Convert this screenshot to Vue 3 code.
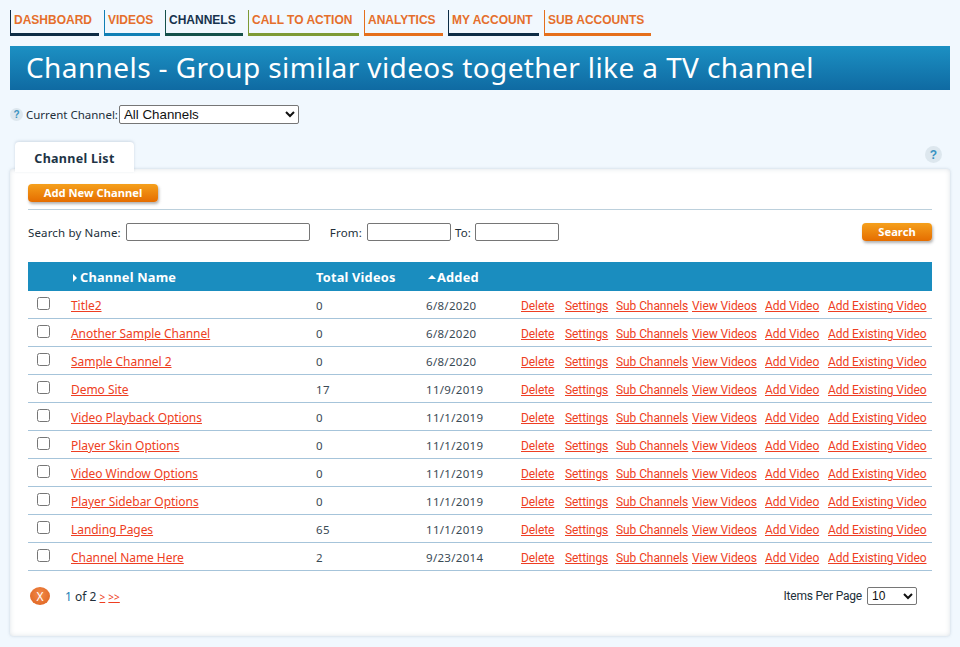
<script setup>
const navItems = [
  { label: 'DASHBOARD', color: '#0d2c45', w: 89 },
  { label: 'VIDEOS', color: '#0f7fb5', w: 56 },
  { label: 'CHANNELS', color: '#14504a', w: 78, active: true },
  { label: 'CALL TO ACTION', color: '#7d9a35', w: 111 },
  { label: 'ANALYTICS', color: '#e56f1c', w: 79 },
  { label: 'MY ACCOUNT', color: '#0d2c45', w: 91 },
  { label: 'SUB ACCOUNTS', color: '#e56f1c', w: 107 }
]
const rows = [
  ['Title2', '0', '6/8/2020'],
  ['Another Sample Channel', '0', '6/8/2020'],
  ['Sample Channel 2', '0', '6/8/2020'],
  ['Demo Site', '17', '11/9/2019'],
  ['Video Playback Options', '0', '11/1/2019'],
  ['Player Skin Options', '0', '11/1/2019'],
  ['Video Window Options', '0', '11/1/2019'],
  ['Player Sidebar Options', '0', '11/1/2019'],
  ['Landing Pages', '65', '11/1/2019'],
  ['Channel Name Here', '2', '9/23/2014']
]
const actions = [
  { label: 'Delete', w: 44 },
  { label: 'Settings', w: 51 },
  { label: 'Sub Channels', w: 76 },
  { label: 'View Videos', w: 73 },
  { label: 'Add Video', w: 63 },
  { label: 'Add Existing Video', w: 99 }
]
</script>

<template>
  <div class="page">
    <nav class="nav">
      <a
        v-for="item in navItems"
        :key="item.label"
        class="nav-item"
        :class="{ active: item.active }"
        :style="{ borderColor: item.color, width: item.w + 'px' }"
      >{{ item.label }}</a>
    </nav>
    <h1 class="banner">Channels - Group similar videos together like a TV channel</h1>
    <div class="current">
      <span class="help small">?</span>
      <label>Current Channel:</label>
      <select class="sel-main"><option>All Channels</option></select>
    </div>
    <div class="tabs">
      <div class="tab">Channel List</div>
      <span class="help big">?</span>
    </div>
    <section class="panel">
      <div class="toolbar">
        <button class="btn add">Add New Channel</button>
      </div>
      <div class="search">
        <label>Search by Name:</label>
        <input class="in-name" type="text" />
        <label>From:</label>
        <input class="in-date" type="text" />
        <label>To:</label>
        <input class="in-date" type="text" />
        <button class="btn go">Search</button>
      </div>
      <table class="grid">
        <colgroup>
          <col class="c1" /><col class="c2" /><col class="c3" /><col class="c4" /><col />
        </colgroup>
        <thead>
          <tr>
            <th></th>
            <th><span class="tri-right"></span>Channel Name</th>
            <th>Total Videos</th>
            <th><span class="tri-up"></span>Added</th>
            <th></th>
          </tr>
        </thead>
        <tbody>
          <tr v-for="r in rows" :key="r[0]">
            <td class="chk"><input type="checkbox" /></td>
            <td><a class="link name">{{ r[0] }}</a></td>
            <td>{{ r[1] }}</td>
            <td>{{ r[2] }}</td>
            <td>
              <div class="acts">
                <span v-for="a in actions" :key="a.label" class="act-cell" :style="{ width: a.w + 'px' }"><a class="link act">{{ a.label }}</a></span>
              </div>
            </td>
          </tr>
        </tbody>
      </table>
      <div class="pager">
        <span class="xbtn">X</span>
        <span class="pages"><span class="one">1</span> of 2 <a class="link tiny">&gt;</a> <a class="link tiny">&gt;&gt;</a></span>
        <span class="per">Items Per Page</span>
        <select class="sel-per"><option>10</option></select>
      </div>
    </section>
  </div>
</template>

<style>
html, body { margin: 0; background: #f1f8fe; }
</style>

<style scoped>
.page {
  width: 940px;
  height: 647px;
  padding: 10px 10px 0;
  font-family: "Noto Sans", "Open Sans", sans-serif;
  font-size: 12px;
  color: #222f3a;
  background: #f1f8fe;
  overflow: hidden;
}
.nav { display: flex; gap: 5px; height: 26px; }
.nav-item {
  box-sizing: border-box;
  height: 26px;
  padding: 2px 0 0 3px;
  border-left: 1px solid;
  border-bottom: 3px solid;
  font: bold 12px/16px "Liberation Sans", Arial, sans-serif;
  color: #e56f2c;
  white-space: nowrap;
}
.nav-item.active { color: #17324d; }
.banner {
  margin: 10px 0 0;
  height: 44px;
  padding-left: 16px;
  font-size: 28px;
  line-height: 42px;
  font-weight: 400;
  letter-spacing: 0.4px;
  color: #fff;
  background: linear-gradient(#1c90c3, #0f6aa2);
  white-space: nowrap;
  box-sizing: border-box;
}
.current {
  display: flex;
  align-items: center;
  height: 20px;
  margin-top: 14px;
  font-size: 11.5px;
}
.current label { margin: 0 1px 0 3px; }
.help {
  display: inline-flex;
  align-items: center;
  justify-content: center;
  border-radius: 50%;
  background: #dde7ee;
  color: #3a93c2;
  font-weight: 700;
  font-family: "Liberation Sans", sans-serif;
}
.help.small { width: 13px; height: 13px; font-size: 10px; }
.help.big { width: 17px; height: 17px; font-size: 12px; margin: 4px 8px 0 0; }
select {
  background: #fff;
  border: 1px solid #767676;
  border-radius: 2px;
  color: #111;
  font-family: "Liberation Sans", Arial, sans-serif;
  box-sizing: border-box;
}
.sel-main { width: 180px; height: 19px; font-size: 13.33px; padding: 0; }
.tabs {
  display: flex;
  justify-content: space-between;
  align-items: flex-start;
  margin-top: 18px;
  height: 27px;
  padding-left: 5px;
  position: relative;
  z-index: 1;
}
.tab {
  box-sizing: border-box;
  width: 119px;
  height: 30px;
  padding-top: 8px;
  text-align: center;
  font-size: 12.5px;
  line-height: 18px;
  font-weight: 700;
  letter-spacing: 0.3px;
  color: #1d3345;
  background: #fff;
  border-radius: 4px 4px 0 0;
  box-shadow: 0 -1px 3px rgba(120, 140, 160, 0.28);
}
.panel {
  box-sizing: border-box;
  height: 467px;
  padding: 15px 18px 0;
  background: #fff;
  border-radius: 3px;
  box-shadow: 0 0 3px rgba(120, 140, 160, 0.35), inset 0 0 5px rgba(150, 165, 180, 0.3);
}
.toolbar {
  height: 25px;
  border-bottom: 1px solid #bcd0dc;
  position: relative;
}
.btn {
  display: block;
  border: 0;
  padding: 0;
  height: 18px;
  border-radius: 4px;
  background: linear-gradient(#f5a01c, #e56d00);
  box-shadow: 1px 2px 3px rgba(80, 80, 80, 0.45);
  color: #fff;
  font-family: "Noto Sans", sans-serif;
  font-weight: 700;
  font-size: 11.2px;
  line-height: 18px;
  text-align: center;
}
.add { width: 130px; position: relative; z-index: 2; }
.go { width: 70px; margin-left: auto; }
.search {
  display: flex;
  align-items: center;
  height: 20px;
  margin-top: 12px;
  font-size: 11.5px;
  letter-spacing: 0.15px;
}
input[type="text"] {
  box-sizing: border-box;
  height: 18px;
  border: 1px solid #767676;
  border-radius: 2px;
  background: #fff;
  padding: 0;
}
.in-name { width: 184px; margin: 0 20px 0 5px; }
.in-date { width: 84px; margin: 0 4px 0 4px; }
.search label:nth-of-type(2) { margin-right: 1px; }
.grid {
  width: 904px;
  margin-top: 20px;
  border-collapse: collapse;
  table-layout: fixed;
}
.c1 { width: 43px; }
.c2 { width: 245px; }
.c3 { width: 110px; }
.c4 { width: 95px; }
thead tr { background: #1a8dbf; height: 29px; }
th {
  padding: 0;
  color: #fff;
  font-size: 12.8px;
  font-weight: 700;
  text-align: left;
  letter-spacing: 0.2px;
}
td {
  padding: 2px 0 0;
  height: 25px;
  border-bottom: 1px solid #a6c4da;
  font-size: 11.5px;
  letter-spacing: 0.3px;
  color: #3a4a55;
}
.chk input {
  display: block;
  width: 13px;
  height: 13px;
  margin: -5px 0 0 9px;
}
.link {
  color: #ee3e22;
  text-decoration: underline;
  white-space: nowrap;
}
.name { font-size: 12px; letter-spacing: -0.05px; }
.act { font-family: Roboto, sans-serif; font-size: 12px; letter-spacing: -0.08px; }
.acts { display: flex; align-items: center; }
.act-cell { display: block; flex: none; }
.tri-right {
  display: inline-block;
  margin: 0 3px 0 2px;
  border-left: 4px solid #fff;
  border-top: 4px solid transparent;
  border-bottom: 4px solid transparent;
}
.tri-up {
  display: inline-block;
  margin: 0 1px 2px 2px;
  vertical-align: middle;
  border-bottom: 4px solid #fff;
  border-left: 4px solid transparent;
  border-right: 4px solid transparent;
}
.pager {
  display: flex;
  align-items: center;
  height: 20px;
  margin-top: 15px;
  font-size: 12px;
}
.xbtn {
  display: flex;
  align-items: center;
  justify-content: center;
  width: 20px;
  height: 18px;
  margin-left: 2px;
  border-radius: 50%;
  background: radial-gradient(circle at 50% 40%, #f28a4a, #dc5f1b);
  color: #fff;
  font-size: 12px;
}
.pages { margin-left: 15px; }
.one { color: #1a7fb5; }
.tiny { font-size: 10px; }
.per { margin-left: auto; margin-right: 5px; font-family: Roboto, sans-serif; font-size: 12px; letter-spacing: -0.2px; }
.sel-per { width: 50px; height: 18px; font-size: 12px; margin-right: 15px; }
</style>
